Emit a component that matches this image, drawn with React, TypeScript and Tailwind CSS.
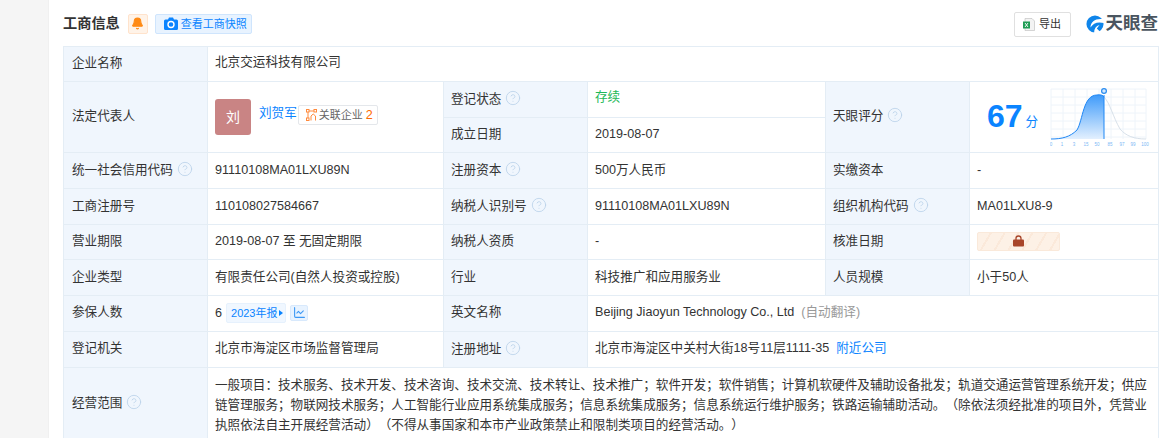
import React from 'react';
import { Bell, ChartLine, CircleHelp } from 'lucide-react';

const FONT = 'font-["Liberation_Sans","Noto_Sans_CJK_SC",sans-serif]';

const Help = () => (
  <CircleHelp size={16} strokeWidth={1.3} className="inline-block ml-[4px] text-[#bcd3ea] align-[-3px]" />
);

const Label: React.FC<{ children: React.ReactNode; help?: boolean; rowSpan?: number; className?: string }> = ({ children, help, rowSpan, className = '' }) => (
  <td rowSpan={rowSpan} className={`bg-[#f0f6fd] border border-[#e4edf5] pl-[7px] first:pl-2 pr-1 pb-[2px] text-[#333] ${className}`}>
    {children}
    {help && <Help />}
  </td>
);

const Cell: React.FC<{ children: React.ReactNode; colSpan?: number; rowSpan?: number; className?: string }> = ({ children, colSpan, rowSpan, className = '' }) => (
  <td colSpan={colSpan} rowSpan={rowSpan} className={`border border-[#e4edf5] pl-[7px] pr-1 pb-[2px] text-[#333] ${className}`}>
    {children}
  </td>
);

const ScoreChart = () => (
  <svg width="100" height="60" viewBox="0 0 100 60" className="block">
    <defs>
      <linearGradient id="fill" x1="0" y1="0" x2="0" y2="1">
        <stop offset="0" stopColor="#3f9bfa" />
        <stop offset="1" stopColor="#e3f0fe" />
      </linearGradient>
    </defs>
    {[1, 13, 25, 37, 49, 61, 73, 85, 96].map(x => (
      <line key={x} x1={x} y1="2" x2={x} y2="52" stroke="#eef4fa" />
    ))}
    {[2, 10, 18, 26, 34, 42, 50].map(y => (
      <line key={y} x1="1" y1={y} x2="96" y2={y} stroke="#eef4fa" />
    ))}
    <path d="M54 10 C60 16 63 30 70 42 C76 49 84 52 96 52" fill="none" stroke="#d8e1ea" strokeWidth="1" />
    <path d="M1 52 C12 52 20 50 27 43 C33 33 33 8 47 8 C50 7.500 53 8 54 10 L54 52 Z" fill="url(#fill)" />
    <path d="M1 52 C12 52 20 50 27 43 C33 33 33 8 47 8 C50 7.500 53 8 54 10" fill="none" stroke="#1f87f5" strokeWidth="1" />
    <line x1="54" y1="8" x2="54" y2="52" stroke="#1f87f5" strokeWidth="1" />
    <circle cx="54" cy="4" r="2.400" fill="#d5e9fe" stroke="#2a8cf0" strokeWidth="1.200" />
    {[['0', 1], ['1', 12], ['3', 24], ['15', 36], ['50', 47], ['85', 60], ['97', 72], ['99', 83], ['100', 95]].map(([t, x]) => (
      <text key={t} x={x} y="59" fontSize="4.500" textAnchor="middle" fill="#7db8f5">{t}</text>
    ))}
  </svg>
);

const Logo = () => (
  <div className="flex items-center gap-[2px]">
    <svg width="18" height="18" viewBox="0 0 20 20">
      <circle cx="10" cy="10" r="9.500" fill="#0f85ea" />
      <path d="M20 5 C12 3 5 7 5 14 C8 9 13 7 20 9 Z" fill="#fff" />
      <path d="M9 20 C9 15 11 12 15 11 L12 15 L17 20 Z" fill="#fff" />
    </svg>
    <span className="text-[17.5px] leading-none font-bold text-[#4a5560]">天眼查</span>
  </div>
);

const CameraIcon = () => (
  <svg width="14" height="13" viewBox="0 0 14 13" className="shrink-0">
    <path d="M1.500 2.500H4L5 .5h4l1 2h2.500A1.500 1.500 0 0 1 14 4v7.500a1.500 1.500 0 0 1-1.500 1.500h-11A1.500 1.500 0 0 1 0 11.500V4a1.500 1.500 0 0 1 1.500-1.500z" fill="#0a84ff" />
    <circle cx="7" cy="7.500" r="3" fill="none" stroke="#fff" strokeWidth="1.400" />
  </svg>
);

const App: React.FC = () => {
  return (
    <div className={`h-[438px] w-[1170px] overflow-hidden bg-[#f5f5f5] flex ${FONT} text-[12.6px]`}>
      <div className="w-[48px] shrink-0" />
      <div className="flex-1 bg-white pl-[14px] pr-3 border-l border-[#f0f0f0]">
        <div className="h-[46px] flex items-center justify-between pt-[2px] pr-[1px]">
          <div className="flex items-center">
            <span className="text-[14.200px] font-bold text-[#333]">工商信息</span>
            <span className="ml-2 w-5 h-5 rounded-[2px] bg-[#fff3e8] border border-[#ffe3cc] flex items-center justify-center">
              <Bell size={13} fill="#ff8a14" className="text-[#ff8a14]" />
            </span>
            <span className="ml-[7px] w-[97px] h-5 pl-2 rounded-[2px] bg-[#e8f3ff] border border-[#cfe5fd] flex items-center gap-[3px] text-[#0a84ff] text-[11px]">
              <CameraIcon />
              查看工商快照
            </span>
          </div>
          <div className="flex items-center">
            <span className="w-[57px] h-[25px] rounded-[2px] border border-[#e0e0e0] flex items-center justify-center gap-1 text-[11px] text-[#333]">
              <svg width="12" height="13" viewBox="0 0 12 13">
                <path d="M2 .5h7l2.500 2.500v9.500H2z" fill="#f3f3f3" stroke="#bbb" strokeWidth=".6" />
                <rect x="0" y="3.500" width="7" height="7" fill="#1f9d55" />
                <path d="M2 5l3 4M5 5L2 9" stroke="#fff" strokeWidth=".9" />
              </svg>
              导出
            </span>
            <div className="ml-[15px]">
              <Logo />
            </div>
          </div>
        </div>

        <table className="w-[1095px] table-fixed border-collapse leading-[18px]">
          <colgroup>
            <col className="w-[144px]" />
            <col className="w-[236px]" />
            <col className="w-[144px]" />
            <col className="w-[238px]" />
            <col className="w-[144px]" />
            <col className="w-[189px]" />
          </colgroup>
          <tbody>
            <tr className="h-[35px]">
              <Label>企业名称</Label>
              <Cell colSpan={5} className="!pb-[4px]">北京交运科技有限公司</Cell>
            </tr>
            <tr className="h-[36px]">
              <Label rowSpan={2}>法定代表人</Label>
              <Cell rowSpan={2} className="!pb-0">
                <div className="flex">
                  <span className="w-9 h-9 rounded-[3px] bg-[#c98484] text-white text-[14px] flex items-center justify-center">刘</span>
                  <span className="ml-2 text-[#0a84ff] leading-[16px] mt-[6px]">刘贺军</span>
                  <span className="ml-[1px] mt-[6px] w-[80px] h-5 pl-[7px] border border-[#e4e7eb] rounded-[2px] flex items-center text-[11px] text-[#666]">
                    <svg width="11" height="12" viewBox="0 0 11 12" className="mr-[2px] shrink-0" fill="none" stroke="#ff8a3c">
                      <rect x=".5" y=".5" width="2.500" height="2.500" />
                      <rect x="8" y=".5" width="2.500" height="2.500" />
                      <rect x=".5" y="9" width="2.500" height="2.500" />
                      <path d="M3 2h5M2 3v6M5 11.500V7M9.500 11.500V7M5 7l2.200-2 2.300 2" />
                    </svg>
                    关联企业<span className="ml-[3px] text-[12.600px] text-[#ff6a00]">2</span>
                  </span>
                </div>
              </Cell>
              <Label help>登记状态</Label>
              <Cell><span className="text-[#1eb858] relative -top-[2px]">存续</span></Cell>
              <Label rowSpan={2} help>天眼评分</Label>
              <Cell rowSpan={2} className="!p-0">
                <div className="flex items-center pl-[17px]">
                  <span className="mb-[2px] text-[32px] text-[#0a84ff] font-bold leading-none">67</span>
                  <span className="ml-[3px] mt-[10px] text-[#0a84ff] text-[12.600px]">分</span>
                  <div className="ml-[12px]">
                    <ScoreChart />
                  </div>
                </div>
              </Cell>
            </tr>
            <tr className="h-[35px]">
              <Label className="first:!pl-[7px]">成立日期</Label>
              <Cell>2019-08-07</Cell>
            </tr>
            <tr className="h-[36px]">
              <Label help>统一社会信用代码</Label>
              <Cell>91110108MA01LXU89N</Cell>
              <Label help>注册资本</Label>
              <Cell>500万人民币</Cell>
              <Label>实缴资本</Label>
              <Cell>-</Cell>
            </tr>
            <tr className="h-[36px]">
              <Label>工商注册号</Label>
              <Cell>110108027584667</Cell>
              <Label help>纳税人识别号</Label>
              <Cell>91110108MA01LXU89N</Cell>
              <Label help>组织机构代码</Label>
              <Cell>MA01LXU8-9</Cell>
            </tr>
            <tr className="h-[35px]">
              <Label>营业期限</Label>
              <Cell>2019-08-07 至 无固定期限</Cell>
              <Label>纳税人资质</Label>
              <Cell>-</Cell>
              <Label>核准日期</Label>
              <Cell>
                <div className="w-[83px] h-[19px] rounded-[2px] border border-[#fae9da] bg-[repeating-linear-gradient(120deg,#fdf1e6_0,#fdf1e6_10px,#fbe9da_10px,#fbe9da_12px)] flex items-center justify-center">
                  <svg width="11" height="12" viewBox="0 0 11 12">
                    <path d="M3 5V3.500a2.500 2.500 0 0 1 5 0V5" fill="none" stroke="#a8452a" strokeWidth="1.300" />
                    <rect x="0" y="4.500" width="11" height="7" rx="1" fill="#a8452a" />
                  </svg>
                </div>
              </Cell>
            </tr>
            <tr className="h-[36px]">
              <Label>企业类型</Label>
              <Cell>有限责任公司(自然人投资或控股)</Cell>
              <Label>行业</Label>
              <Cell>科技推广和应用服务业</Cell>
              <Label>人员规模</Label>
              <Cell>小于50人</Cell>
            </tr>
            <tr className="h-[36px]">
              <Label className="!pb-[4px]">参保人数</Label>
              <Cell>
                <div className="flex items-center">
                  6
                  <span className="ml-[4px] w-[60px] h-5 pl-1 bg-[#f0f7ff] rounded-[2px] border border-[#e6f1fd] text-[11px] text-[#0a84ff] flex items-center">
                    2023年报
                    <span className="ml-[1px] border-l-[4px] border-y-[3px] border-l-[#0a84ff] border-y-transparent" />
                  </span>
                  <span className="ml-[4px] w-[18px] h-4 bg-[#e8f3ff] rounded-[2px] border border-[#d8e9fc] flex items-center justify-center">
                    <ChartLine size={13} className="text-[#3b98f5]" />
                  </span>
                </div>
              </Cell>
              <Label className="!pb-[4px]">英文名称</Label>
              <Cell colSpan={3} className="!pb-[4px]">
                Beijing Jiaoyun Technology Co., Ltd<span className="ml-[7px] text-[#999]">(自动翻译)</span>
              </Cell>
            </tr>
            <tr className="h-[36px]">
              <Label className="!pb-[4px]">登记机关</Label>
              <Cell className="!pb-[4px]">北京市海淀区市场监督管理局</Cell>
              <Label help>注册地址</Label>
              <Cell colSpan={3} className="!pb-[4px]">
                北京市海淀区中关村大街18号11层1111-35<span className="ml-[7px] text-[#0a84ff]">附近公司</span>
              </Cell>
            </tr>
            <tr>
              <Label help>经营范围</Label>
              <Cell colSpan={5} className="!pt-[7px] !pb-[4px] !leading-[20px] align-top [text-spacing-trim:space-all]">
                一般项目：技术服务、技术开发、技术咨询、技术交流、技术转让、技术推广；软件开发；软件销售；计算机软硬件及辅助设备批发；轨道交通运营管理系统开发；供应链管理服务；物联网技术服务；人工智能行业应用系统集成服务；信息系统集成服务；信息系统运行维护服务；铁路运输辅助活动。（除依法须经批准的项目外，凭营业执照依法自主开展经营活动）（不得从事国家和本市产业政策禁止和限制类项目的经营活动。）
              </Cell>
            </tr>
          </tbody>
        </table>
      </div>
    </div>
  );
};

export default App;
